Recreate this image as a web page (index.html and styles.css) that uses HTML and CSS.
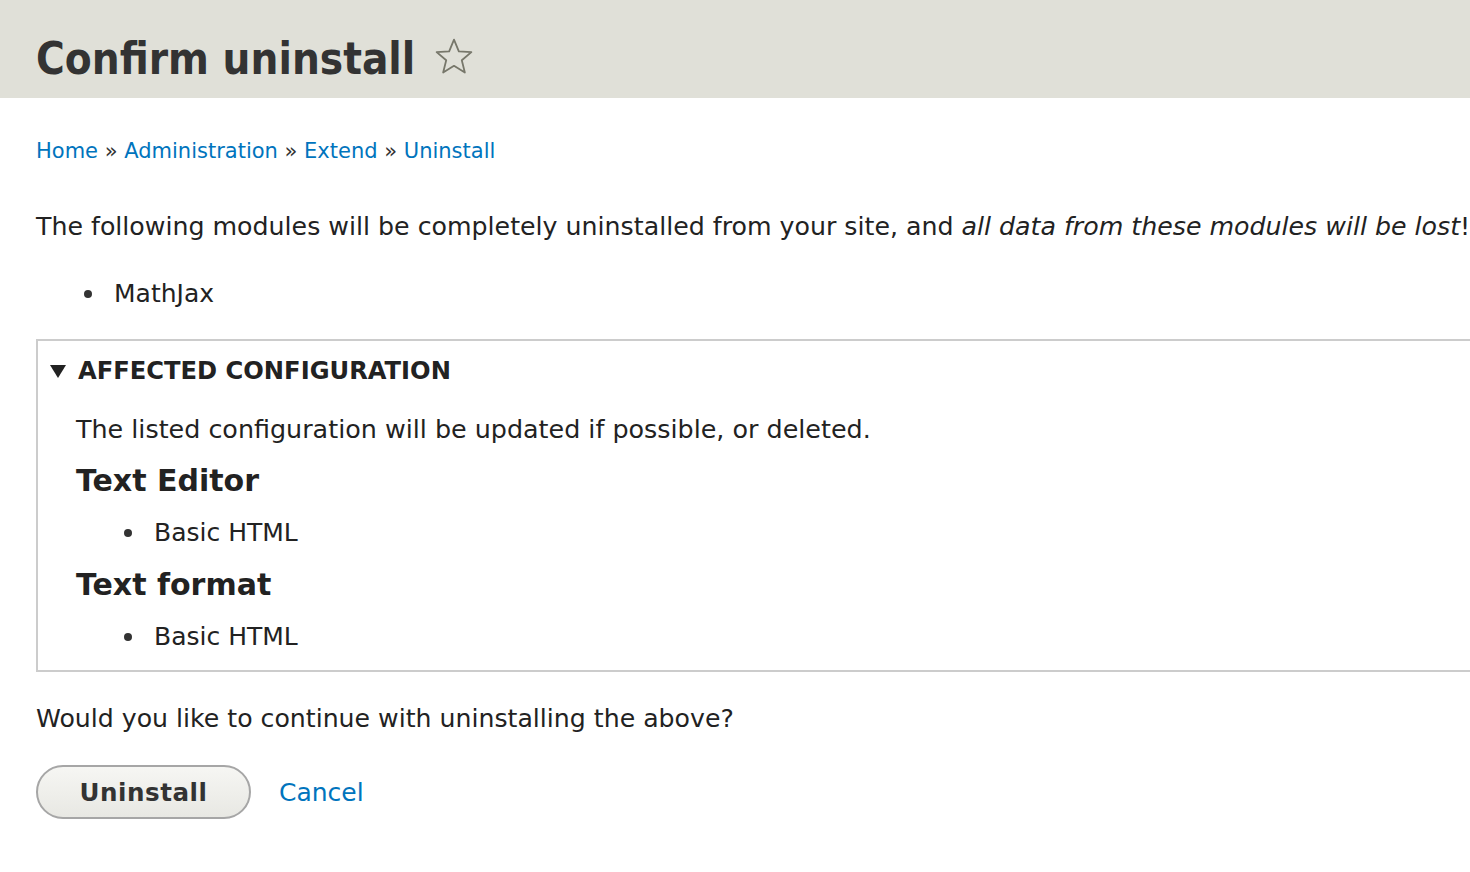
FILE: index.html
```html
<!DOCTYPE html>
<html>
<head>
<meta charset="utf-8">
<link rel="stylesheet" href="styles.css">
</head>
<body>
<header class="page-header">
  <h1 class="page-title">Confirm uninstall
    <svg class="star" width="40" height="40" viewBox="0 0 38 38"><path d="M19 2.5 L23.6 13.6 L35.5 14.4 L26.4 22.1 L29.3 33.8 L19 27.4 L8.7 33.8 L11.6 22.1 L2.5 14.4 L14.4 13.6 Z" fill="none" stroke="#77776a" stroke-width="1.7" stroke-linejoin="round"/></svg>
  </h1>
</header>
<main class="content">
  <nav class="breadcrumb">
    <a href="#">Home</a> » <a href="#">Administration</a> » <a href="#">Extend</a> » <a href="#">Uninstall</a>
  </nav>
  <p class="intro">The following modules will be completely uninstalled from your site, and <em>all data from these modules will be lost</em>!</p>
  <ul class="list modules">
    <li>MathJax</li>
  </ul>
  <details class="config" open>
    <summary class="config-summary"><span class="tri"></span>AFFECTED CONFIGURATION</summary>
    <div class="config-body">
      <p class="config-desc">The listed configuration will be updated if possible, or deleted.</p>
      <h3 class="config-heading">Text Editor</h3>
      <ul class="list sub">
        <li>Basic HTML</li>
      </ul>
      <h3 class="config-heading">Text format</h3>
      <ul class="list sub">
        <li>Basic HTML</li>
      </ul>
    </div>
  </details>
  <p class="question">Would you like to continue with uninstalling the above?</p>
  <div class="actions">
    <button class="button" type="button">Uninstall</button>
    <a class="cancel" href="#">Cancel</a>
  </div>
</main>
</body>
</html>
```
FILE: styles.css
```css
html {
  overflow: hidden;
}
body {
  margin: 0;
  font-family: "DejaVu Sans", "Liberation Sans", sans-serif;
  color: #222;
  background: #fff;
  width: 1510px;
}
.page-header {
  background: #e0e0d8;
  height: 98px;
  box-sizing: border-box;
  padding: 19px 36px 0;
  display: flex;
  align-items: center;
}
.page-title {
  margin: 0;
  font-family: "DejaVu Sans Condensed", "DejaVu Sans", sans-serif;
  font-size: 43.6px;
  line-height: 50px;
  font-weight: bold;
  color: #333;
  display: flex;
  align-items: center;
  gap: 19px;
}
.star {
  display: block;
  margin-top: -3px;
}
.content {
  padding: 0 0 0 36px;
}
.breadcrumb {
  margin-top: 40px;
  font-size: 21px;
  line-height: 26px;
  color: #333;
}
.breadcrumb a, .cancel {
  color: #0074bd;
  text-decoration: none;
}
.intro {
  margin: 48px 0 0;
  font-size: 25.25px;
  line-height: 30px;
  color: #222;
}
.list {
  margin: 0;
  padding: 0;
  list-style: none;
}
.list li {
  display: flex;
  align-items: center;
  font-size: 25px;
  line-height: 30px;
}
.list li::before {
  content: "";
  width: 8px;
  height: 8px;
  border-radius: 50%;
  background: #333;
  margin-right: 22px;
}
.modules {
  margin: 37px 0 0 48px;
}
.config {
  margin-top: 30px;
  border: 2px solid #ccc;
  width: 1480px;
  box-sizing: border-box;
  padding: 0 0 18px;
}
.config-summary {
  list-style: none;
  display: flex;
  align-items: center;
  font-size: 24.2px;
  font-weight: bold;
  height: 60px;
  padding-left: 12px;
  color: #222;
}
.config-summary::-webkit-details-marker {
  display: none;
}
.tri {
  width: 0;
  height: 0;
  border-left: 8px solid transparent;
  border-right: 8px solid transparent;
  border-top: 13px solid #222;
  margin-right: 12px;
}
.config-body {
  padding-left: 38px;
}
.config-desc {
  margin: 13px 0 0;
  font-size: 25.4px;
  line-height: 30px;
}
.config-heading {
  margin: 20px 0 0;
  font-size: 30px;
  line-height: 34px;
  font-weight: bold;
  color: #222;
}
.sub {
  margin: 20px 0 0 48px;
}
.question {
  margin: 32px 0 0;
  font-size: 25.2px;
  line-height: 30px;
}
.actions {
  margin-top: 31px;
  display: flex;
  align-items: center;
  gap: 28px;
}
.button {
  width: 215px;
  height: 54px;
  border: 2px solid #a6a6a6;
  border-radius: 27px;
  background: linear-gradient(#f6f6f3, #e8e8e3);
  font-family: inherit;
  font-size: 24.6px;
  font-weight: bold;
  color: #333;
  letter-spacing: 0.5px;
  padding: 0;
}
.cancel {
  font-size: 25px;
}
```
